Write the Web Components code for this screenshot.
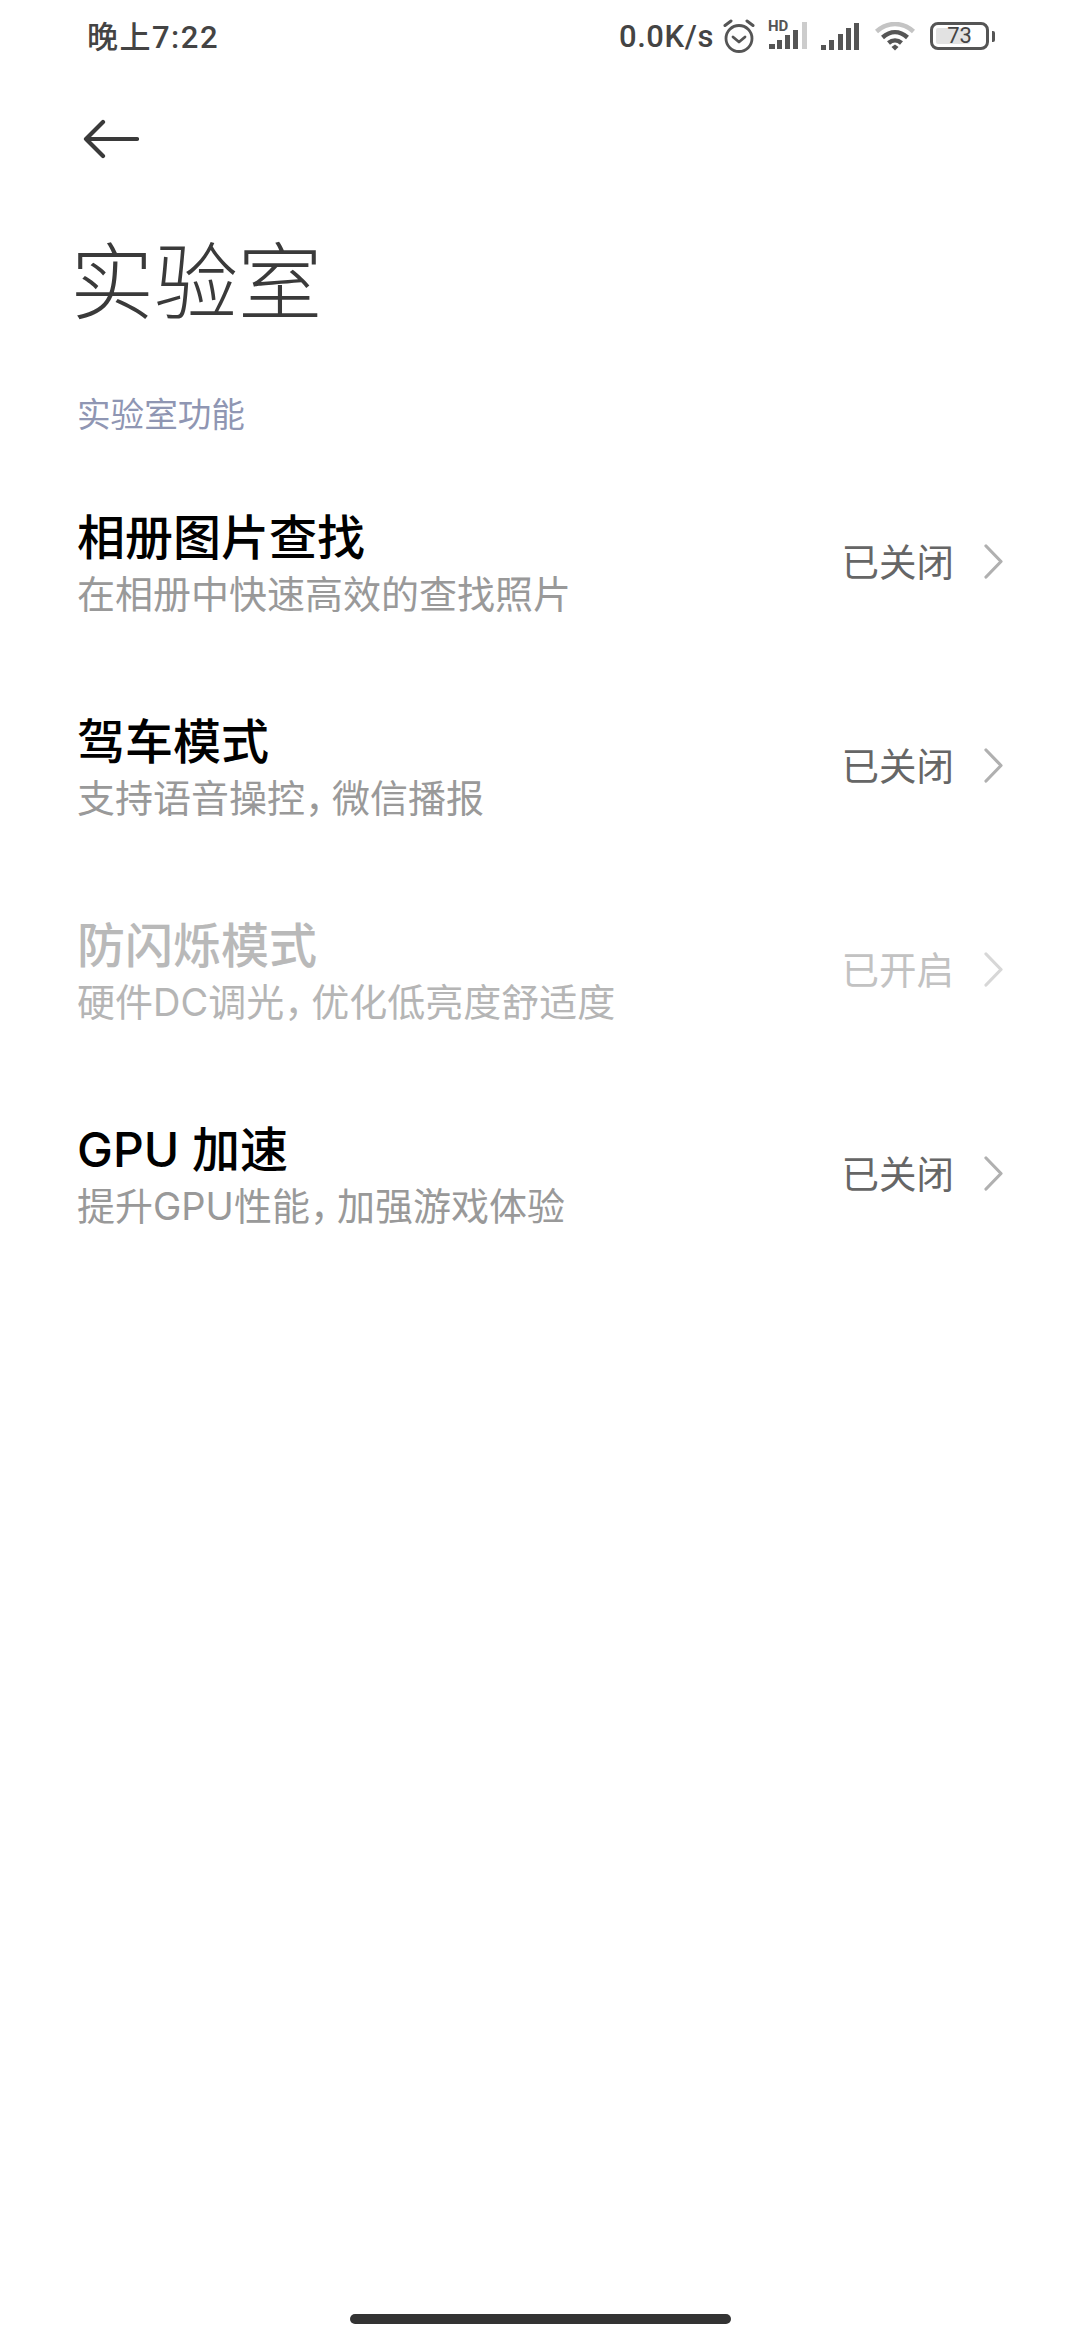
<!DOCTYPE html>
<html lang="zh">
<head>
<meta charset="utf-8">
<title>实验室</title>
<style>
  html, body { margin: 0; background: #fff; }
  body { width: 1080px; height: 2340px; display: flex; flex-direction: column; font-family: "Noto Sans CJK SC", "Noto Sans", sans-serif; }
  lab-list { flex: 1; }
</style>
</head>
<body>
<status-bar></status-bar>
<back-title heading="实验室"></back-title>
<lab-list label="实验室功能">
  <lab-row title="相册图片查找" sub="在相册中快速高效的查找照片" value="已关闭"></lab-row>
  <lab-row title="驾车模式" sub="支持语音操控，微信播报" value="已关闭"></lab-row>
  <lab-row title="防闪烁模式" sub="硬件DC调光，优化低亮度舒适度" value="已开启" disabled></lab-row>
  <lab-row title="GPU 加速" sub="提升GPU性能，加强游戏体验" value="已关闭"></lab-row>
</lab-list>
<home-bar></home-bar>

<script>
const statusTemplate = document.createElement("template");
statusTemplate.innerHTML = `
  <style>
    :host { display: flex; height: 72px; padding: 0 85px 0 87px; align-items: center; justify-content: space-between; color: #444; font-family: Roboto, "Noto Sans CJK SC", sans-serif; font-size: 31px; font-weight: 500; }
    .time { letter-spacing: 1.5px; padding-bottom: 4px; }
    .right { display: flex; align-items: center; }
    .speed { letter-spacing: .6px; margin-right: 9px; }
    svg { display: block; }
    .alarm { margin-right: 13px; }
    .sim1 { margin: 0 14px 6px 0; }
    .sim2 { margin-right: 16px; }
    .wifi { margin-right: 15px; }
  </style>
  <div class="time">晚上7:22</div>
  <div class="right">
    <span class="speed">0.0K/s</span>
    <svg class="alarm" width="32" height="34" viewBox="0 0 32 34" fill="none" stroke="#555" stroke-linecap="round">
      <circle cx="16" cy="19.500" r="13" stroke-width="2.800"/>
      <path d="M10 18l6 5 6-5" stroke-width="2.800" stroke-linejoin="round"/>
      <path d="M2 6.500l6-4.500M30 6.500l-6-4.500" stroke-width="3"/>
    </svg>
    <svg class="sim1" width="39" height="32" viewBox="0 -4 39 32">
      <text x="0" y="10" font-family="Roboto, sans-serif" font-size="15" font-weight="700" fill="#555">HD</text>
      <g fill="#555"><rect x="1" y="23" width="6" height="5"/><rect x="9" y="19" width="5" height="9"/><rect x="17" y="14" width="5" height="14"/><rect x="25" y="9" width="5" height="19"/></g>
      <rect x="34" y="1" width="5" height="27" fill="#ccc"/>
    </svg>
    <svg class="sim2" width="38" height="28" viewBox="0 0 38 28" fill="#555">
      <rect x="0" y="23" width="5" height="5"/><rect x="8" y="18" width="5" height="10"/><rect x="17" y="12" width="5" height="16"/><rect x="25" y="6" width="5" height="22"/><rect x="33" y="1" width="5" height="27"/>
    </svg>
    <svg class="wifi" width="40" height="29" viewBox="0 0 40 29" fill="none">
      <path d="M1.500 9.500c11-10 26-10 37 0" stroke="#c4c4c4" stroke-width="4.500"/>
      <path d="M7.500 15.500c8-7 17-7 25 0" stroke="#555" stroke-width="4.500"/>
      <path d="M13.500 21c4-3.500 9-3.500 13 0" stroke="#555" stroke-width="4.500"/>
      <path d="M16.500 25l3.500-2.500 3.500 2.500-3.500 3.500z" fill="#555"/>
    </svg>
    <lab-battery level="73"></lab-battery>
  </div>`;

class StatusBar extends HTMLElement {
  constructor() {
    super();
    this.attachShadow({ mode: "open" }).appendChild(statusTemplate.content.cloneNode(true));
  }
}

const batteryTemplate = document.createElement("template");
batteryTemplate.innerHTML = `
  <style>
    :host { display: flex; align-items: center; gap: 3px; }
    .body { box-sizing: border-box; width: 59px; height: 28px; border: 3.500px solid #555; border-radius: 8px; padding: 3px; position: relative; display: flex; }
    .fill { width: 73%; background: #e2e2e2; border-radius: 2px; }
    .num { position: absolute; inset: 0; text-align: center; font: 400 22px/21px Roboto, sans-serif; color: #444; }
    .cap { width: 3px; height: 11px; background: #555; border-radius: 0 2px 2px 0; }
  </style>
  <div class="body"><div class="fill"></div><div class="num"></div></div>
  <div class="cap"></div>`;

class LabBattery extends HTMLElement {
  constructor() {
    super();
    this.attachShadow({ mode: "open" }).appendChild(batteryTemplate.content.cloneNode(true));
    this.shadowRoot.querySelector(".num").textContent = this.getAttribute("level");
  }
}

const headerTemplate = document.createElement("template");
headerTemplate.innerHTML = `
  <style>
    :host { display: block; padding: 47px 0 0 70px; color: #3a3a3a; }
    svg { display: block; margin: 0 0 0 13px; }
    h1 { margin: 63px 0 0; font-weight: 300; font-size: 84px; line-height: 110px; }
  </style>
  <svg width="56" height="40" viewBox="0 0 56 40" fill="none" stroke="#3a3a3a" stroke-width="4.200" stroke-linecap="round" stroke-linejoin="round">
    <path d="M54 20H3M20 3L3 20l17 17"/>
  </svg>
  <h1></h1>`;

class BackTitle extends HTMLElement {
  constructor() {
    super();
    this.attachShadow({ mode: "open" }).appendChild(headerTemplate.content.cloneNode(true));
    this.shadowRoot.querySelector("h1").textContent = this.getAttribute("heading");
  }
}

const listTemplate = document.createElement("template");
listTemplate.innerHTML = `
  <style>
    :host { display: block; padding-top: 57px; }
    .label { padding-left: 77px; font-size: 33.600px; line-height: 48px; color: #8f96b3; margin-bottom: 22px; }
  </style>
  <div class="label"></div>
  <slot></slot>`;

class LabList extends HTMLElement {
  constructor() {
    super();
    this.attachShadow({ mode: "open" }).appendChild(listTemplate.content.cloneNode(true));
    this.shadowRoot.querySelector(".label").textContent = this.getAttribute("label");
  }
}

const rowTemplate = document.createElement("template");
rowTemplate.innerHTML = `
  <style>
    :host { display: flex; height: 204px; padding: 0 0 0 77px; align-items: center; }
    .text { flex: 1; min-width: 0; padding-top: 6px; font-family: Inter, "Noto Sans CJK SC", sans-serif; }
    .title { font-size: 48px; line-height: 60px; font-weight: 500; color: #000; }
    .sub { font-size: 38px; line-height: 53px; color: #999; }
    .comma { letter-spacing: -11px; }
    .value { font-size: 37.500px; color: #666; margin-right: 30px; padding-bottom: 4px; }
    svg { display: block; margin-right: 77px; }
    :host([disabled]) .title { color: #b9b9b9; }
    :host([disabled]) .sub { color: #b5b5b5; }
    :host([disabled]) .value { color: #c2c2c2; }
    :host([disabled]) svg { opacity: .5; }
  </style>
  <div class="text"><div class="title"></div><div class="sub"></div></div>
  <div class="value"></div>
  <svg width="19" height="35" viewBox="0 0 19 35" fill="none" stroke="#b0b0b0" stroke-width="3.200" stroke-linecap="round" stroke-linejoin="round">
    <path d="M2 2l15 15.500L2 33"/>
  </svg>`;

class LabRow extends HTMLElement {
  constructor() {
    super();
    this.attachShadow({ mode: "open" }).appendChild(rowTemplate.content.cloneNode(true));
    this.shadowRoot.querySelector(".title").textContent = this.getAttribute("title");
    const sub = this.shadowRoot.querySelector(".sub");
    // the fullwidth comma is set tight, as on the device
    this.getAttribute("sub").split("，").forEach((part, i) => {
      if (i > 0) {
        const comma = document.createElement("span");
        comma.className = "comma";
        comma.textContent = "，";
        sub.appendChild(comma);
      }
      sub.appendChild(document.createTextNode(part));
    });
    this.shadowRoot.querySelector(".value").textContent = this.getAttribute("value");
  }
}

const homeTemplate = document.createElement("template");
homeTemplate.innerHTML = `
  <style>
    :host { display: flex; justify-content: center; padding-bottom: 16px; }
    div { width: 381px; height: 10px; border-radius: 5px; background: #333; }
  </style>
  <div></div>`;

class HomeBar extends HTMLElement {
  constructor() {
    super();
    this.attachShadow({ mode: "open" }).appendChild(homeTemplate.content.cloneNode(true));
  }
}

window.customElements.define("status-bar", StatusBar);
window.customElements.define("lab-battery", LabBattery);
window.customElements.define("back-title", BackTitle);
window.customElements.define("lab-list", LabList);
window.customElements.define("lab-row", LabRow);
window.customElements.define("home-bar", HomeBar);
</script>
</body>
</html>
